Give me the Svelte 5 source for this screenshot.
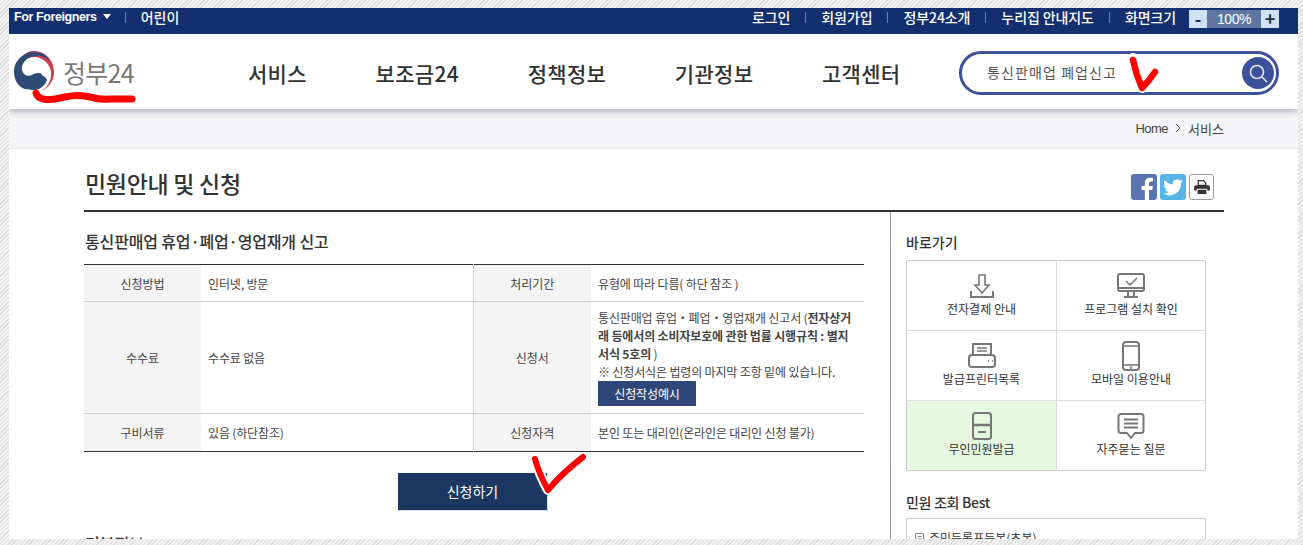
<script>
  const topLeft = ['로그인', '회원가입', '정부24소개', '누리집 안내지도']
  const nav = ['서비스', '보조금24', '정책정보', '기관정보', '고객센터']
  const shortcuts = [
    { label: '전자결제 안내', icon: 'download' },
    { label: '프로그램 설치 확인', icon: 'monitor' },
    { label: '발급프린터목록', icon: 'printer' },
    { label: '모바일 이용안내', icon: 'mobile' },
    { label: '무인민원발급', icon: 'kiosk', active: true },
    { label: '자주묻는 질문', icon: 'faq' }
  ]
</script>

<div class="frame">
  <div class="topbar">
    <div class="top-left">
      <span class="foreign">For Foreigners <i class="caret"></i></span>
      <span class="bar"></span>
      <span class="kids">어린이</span>
    </div>
    <div class="top-right">
      {#each topLeft as item}
        <span>{item}</span>
        <span class="bar"></span>
      {/each}
      <span>화면크기</span>
      <div class="zoom">
        <b>-</b>
        <em>100%</em>
        <b>+</b>
      </div>
    </div>
  </div>

  <header>
    <div class="logo">
      <svg width="42" height="42" viewBox="0 0 42 42">
        <path d="M41 21a20 20 0 0 1-13 19c6-3 11-10 10-19-1-8-8-15-17-15-8 0-14 5-15 12-2-10 6-18 15-18 11 0 20 9 20 21z" fill="#c9404f" />
        <path d="M1 21C1 9 11 1 21 1c8 0 14 4 16 9-3-3-9-6-15-5C13 6 8 13 9 19c1 5 6 7 10 5 3-2 7-3 10-1-1 8-5 14-12 15-9 2-16-7-16-17z" fill="#2d4d76" />
        <path d="M10 17c1-5 6-9 12-9 7 0 13 5 13 12 0 3-1 6-2 7-2-5-7-7-12-5-5 2-10 0-11-5z" fill="#fff" />
        <path d="M6 21c1 4 5 8 10 7 3-1 6-4 10-4 4 0 7 2 8 5-2 6-8 11-15 10C11 38 5 30 6 21z" fill="#2d4d76" />
      </svg>
      <span>정부24</span>
    </div>
    <nav>
      {#each nav as item}
        <a href="#top">{item}</a>
      {/each}
    </nav>
    <div class="search">
      <span>통신판매업 폐업신고</span>
      <div class="search-btn">
        <svg width="22" height="22" viewBox="0 0 22 22" fill="none" stroke="#dfe4f2" stroke-width="1.6">
          <circle cx="10" cy="10" r="6.5" />
          <path d="M15 15l5 5" />
        </svg>
      </div>
    </div>
  </header>

  <div class="crumb">
    <span>Home</span>
    <svg width="6" height="10" viewBox="0 0 6 10" fill="none" stroke="#555"><path d="M1 1l4 4-4 4" /></svg>
    <span>서비스</span>
  </div>

  <main>
    <div class="title-row">
      <h1>민원안내 및 신청</h1>
      <div class="share">
        <div class="fb">
          <svg width="26" height="26" viewBox="0 0 26 26"><path d="M18 26V16h3.2l.6-4H18V9.500c0-1.300.5-2 2-2h2V4c-.8-.1-1.800-.2-3-.2-3.200 0-5.200 1.900-5.200 5.300V12h-3.300v4h3.300v10z" fill="#fff" /></svg>
        </div>
        <div class="tw">
          <svg width="26" height="26" viewBox="0 0 26 26"><path d="M23 7.300c-.7.300-1.500.5-2.300.6.800-.5 1.500-1.300 1.800-2.200-.8.500-1.700.8-2.600 1a4.100 4.100 0 0 0-7 3.700C9.500 10.200 6.500 8.600 4.400 6.100c-1.100 1.900-.5 4.300 1.300 5.500-.7 0-1.300-.2-1.900-.5 0 2 1.400 3.700 3.300 4.100-.6.200-1.200.2-1.900.1.500 1.600 2 2.800 3.800 2.800A8.300 8.300 0 0 1 3 19.300 11.600 11.600 0 0 0 21 9c.8-.5 1.500-1 2-1.700z" fill="#fff" /></svg>
        </div>
        <div class="print">
          <svg width="16" height="14" viewBox="0 0 18 16" fill="#333">
            <path d="M4 0h7l3 3v4H4zM5.500 1.500V5.500h7V3.600L10.400 1.500z" fill-rule="evenodd" />
            <path d="M2 6h14a2 2 0 0 1 2 2v4h-3v-2H3v2H0V8a2 2 0 0 1 2-2z" />
            <path d="M4 11h10v5H4z" />
          </svg>
        </div>
      </div>
    </div>

    <div class="columns">
      <section class="content">
        <h2>통신판매업 휴업·폐업·영업재개 신고</h2>
        <table>
          <tbody>
            <tr>
              <th>신청방법</th>
              <td>인터넷, 방문</td>
              <th class="mid">처리기간</th>
              <td>유형에 따라 다름( 하단 참조 )</td>
            </tr>
            <tr>
              <th>수수료</th>
              <td>수수료 없음</td>
              <th class="mid">신청서</th>
              <td class="form-cell">
                통신판매업 휴업・폐업・영업재개 신고서 (<strong>전자상거래 등에서의 소비자보호에 관한 법률 시행규칙 : 별지 서식 5호의</strong> )
                <p>※ 신청서식은 법령의 마지막 조항 밑에 있습니다.</p>
                <span class="example">신청작성예시</span>
              </td>
            </tr>
            <tr>
              <th>구비서류</th>
              <td>있음 (하단참조)</td>
              <th class="mid">신청자격</th>
              <td>본인 또는 대리인(온라인은 대리인 신청 불가)</td>
            </tr>
          </tbody>
        </table>
        <div class="apply-row">
          <span class="apply">신청하기</span>
        </div>
        <h3>기본정보</h3>
      </section>

      <aside>
        <h4>바로가기</h4>
        <div class="grid">
          {#each shortcuts as s}
            <div class="cell" class:active={s.active}>
              <svg width="30" height="30" viewBox="0 0 30 30" fill="none" stroke="#777" stroke-width="2">
                {#if s.icon === 'download'}
                  <path d="M12 4h6v10h4l-7 8-7-8h4z" stroke-width="1.600" />
                  <path d="M4 20v6h22v-6" />
                {:else if s.icon === 'monitor'}
                  <rect x="2" y="3" width="26" height="17" rx="2" />
                  <path d="M2 17h26" />
                  <path d="M10 10l4 4 7-7" stroke-width="1.500" />
                  <path d="M12 20v5M18 20v5M8 26h14" />
                {:else if s.icon === 'printer'}
                  <path d="M6 14V3h18v11" />
                  <path d="M10 7h10M10 10h10" stroke-width="1.400" />
                  <rect x="2" y="14" width="26" height="12" rx="3" />
                  <path d="M21 20h1M25 20h1" stroke-width="1.500" />
                {:else if s.icon === 'mobile'}
                  <rect x="7" y="1" width="16" height="28" rx="3" />
                  <path d="M7 5h16M7 24h16" stroke-width="1.400" />
                  <circle cx="15" cy="26.500" r="1" stroke-width="1" />
                {:else if s.icon === 'kiosk'}
                  <rect x="6" y="2" width="18" height="26" rx="2.500" />
                  <path d="M6 14h18" stroke-width="2.500" />
                  <path d="M11 21h8" />
                {:else}
                  <path d="M5 3h20a2.500 2.500 0 0 1 2.500 2.500v14a2.500 2.500 0 0 1-2.500 2.500h-6l-4 5-4-5H5a2.500 2.500 0 0 1-2.500-2.500v-14A2.500 2.500 0 0 1 5 3z" />
                  <path d="M8 8.500h14M8 12.500h14M8 16.500h14" />
                {/if}
              </svg>
              <span>{s.label}</span>
            </div>
          {/each}
        </div>
        <h4 class="best">민원 조회 Best</h4>
        <div class="best-box">
          <svg width="9" height="10" viewBox="0 0 9 10" fill="none" stroke="#888"><path d="M.5.500h8v9h-8zM2.500 3.500h4M2.500 6h4" /></svg>
          <span>주민등록표등본(초본)</span>
        </div>
      </aside>
    </div>
  </main>

  <!-- red marker scribbles on top of the capture -->
  <svg class="marks" width="1289" height="531" viewBox="0 0 1289 531" fill="none" stroke-linecap="round" stroke-linejoin="round">
    <path d="M1124 50c2 10 5 20 9 30 4-4 9-10 13-16" stroke="#fff" stroke-width="10" />
    <path d="M526 450c3 12 8 23 13 32 10-12 22-23 35-33" stroke="#fff" stroke-width="10" />
    <path d="M27 85c2 7 12 8 24 5 12-3 18-3 30-1 8 2 14 3 20 2 8 0 14 0 22 0" stroke="#f00" stroke-width="7" />
    <path d="M1124 52c2 10 5 19 9 28 4-4 9-10 13-16" stroke="#f00" stroke-width="6.500" />
    <path d="M526 451c3 11 8 22 13 31 10-12 22-23 35-33" stroke="#f00" stroke-width="6" />
  </svg>
</div>

<style>
  :global(body) {
    background: repeating-linear-gradient(135deg, #dcdcdc 0 1px, #f2f2f2 1px 3px);
    overflow: hidden;
  }
  .frame {
    position: relative;
    margin: 8px 0 0 9px;
    width: 1289px;
    height: 531px;
    overflow: hidden;
    background: #fff;
    color: #333;
    font-family: "Noto Sans CJK KR", "Noto Sans", sans-serif;
    font-size: 12px;
  }

  .topbar {
    height: 26px;
    background: #132f6f;
    color: #fff;
    display: flex;
    justify-content: space-between;
    align-items: flex-start;
    padding: 0 19px 0 5px;
    font-size: 14px;
    font-weight: 500;
    line-height: 18px;
  }
  .top-left, .top-right {
    display: flex;
    align-items: center;
    height: 18px;
  }
  .top-right { letter-spacing: -0.1px; }
  .foreign {
    font-family: "Liberation Sans", sans-serif;
    font-weight: 700;
    font-size: 12.500px;
    letter-spacing: -0.4px;
  }
  .caret {
    display: inline-block;
    margin: 0 0 2px 3px;
    border: 4px solid transparent;
    border-top: 5px solid #fff;
    border-bottom: 0;
  }
  .bar {
    width: 1px;
    height: 11px;
    background: #6d80aa;
    margin: 0 14px;
  }
  .kids { margin-left: 1px; }
  .top-right .bar { margin: 0 15px; }
  .top-right .bar:nth-last-of-type(1) { margin: 0 14px; }
  .zoom {
    display: flex;
    align-items: center;
    height: 18px;
    margin: 4px 0 0 13px;
    background: #5f76a3;
  }
  .zoom b {
    width: 18px;
    height: 18px;
    background: #cfe2f3;
    color: #234;
    text-align: center;
    line-height: 17px;
    font-size: 18px;
  }
  .zoom em {
    width: 54px;
    text-align: center;
    font-style: normal;
    font-family: "Liberation Sans", sans-serif;
    font-size: 14px;
    line-height: 18px;
    letter-spacing: -0.4px;
  }

  header {
    height: 75px;
    display: flex;
    align-items: center;
    padding-left: 4px;
    box-shadow: 0 3px 6px rgba(110, 115, 150, 0.45);
    position: relative;
  }
  .logo {
    width: 235px;
    display: flex;
    align-items: center;
    gap: 8px;
    color: #787878;
    font-size: 25px;
    letter-spacing: -0.7px;
    flex: none;
  }
  nav {
    display: flex;
    gap: 68.700px;
    flex: none;
    width: 711px;
    margin-top: 2px;
  }
  nav a {
    color: #333;
    text-decoration: none;
    font-size: 21px;
    font-weight: 500;
    letter-spacing: 0.3px;
  }
  .search {
    box-sizing: border-box;
    width: 320px;
    height: 44px;
    border: 3px solid #3b5199;
    border-radius: 22px;
    display: flex;
    align-items: center;
    justify-content: space-between;
    padding: 0 2px 0 25px;
    color: #555;
    font-size: 14px;
    font-weight: 400;
    letter-spacing: 1.100px;
    margin-top: 3px;
  }
  .search span { padding-bottom: 2px; }
  .search-btn {
    width: 32px;
    height: 32px;
    border-radius: 50%;
    background: #3b5199;
    display: flex;
    align-items: center;
    justify-content: center;
  }

  .crumb {
    box-sizing: border-box;
    height: 40px;
    background: #f5f4f6;
    border-bottom: 1px solid #e8e8e8;
    display: flex;
    align-items: center;
    justify-content: flex-end;
    gap: 7px;
    padding: 0 74px 1px 0;
    color: #444;
    font-size: 13px;
  }
  .crumb span:first-child {
    font-family: "Liberation Sans", sans-serif;
    letter-spacing: -0.5px;
  }

  main {
    margin: 0 74px 0 75px;
  }
  .title-row {
    box-sizing: border-box;
    height: 63px;
    border-bottom: 2px solid #333;
    display: flex;
    justify-content: space-between;
    align-items: flex-start;
  }
  h1 {
    margin: 16px 0 0 1px;
    font-size: 23px;
    line-height: 36px;
    font-weight: 500;
    letter-spacing: -0.3px;
    color: #333;
  }
  .share {
    display: flex;
    gap: 3px;
    margin: 25px 10px 0 0;
  }
  .share > div {
    box-sizing: border-box;
    width: 26px;
    height: 26px;
    border-radius: 3px;
    overflow: hidden;
  }
  .fb { background: #5b74b1; }
  .tw { background: #55b4e8; }
  .print {
    width: 25px !important;
    border: 1px solid #999;
    display: flex;
    align-items: center;
    justify-content: center;
  }

  .columns {
    display: flex;
    align-items: stretch;
  }
  .content {
    box-sizing: border-box;
    width: 807px;
    padding-right: 26px;
    border-right: 1px solid #999;
    height: 330px;
  }
  h2 {
    margin: 18px 0 12px 1px;
    font-size: 16px;
    line-height: 22px;
    font-weight: 500;
    letter-spacing: -0.15px;
    color: #333;
  }
  table {
    width: 780px;
    border-collapse: collapse;
    table-layout: fixed;
    border-top: 1px solid #333;
    border-bottom: 1px solid #333;
  }
  th, td {
    box-sizing: border-box;
    padding: 0;
    font-weight: 400;
    font-size: 12px;
    color: #444;
    border-bottom: 1px solid #d0d0d0;
  }
  tr:last-child th, tr:last-child td { border-bottom: 0; }
  tr:first-child th, tr:first-child td { height: 37px; }
  tr:last-child th, tr:last-child td { height: 38px; }
  th {
    background: #f4f4f4;
    text-align: center;
  }
  th.mid { border-left: 1px solid #d0d0d0; }
  td {
    padding-left: 7px;
    letter-spacing: -0.15px;
  }
  table tr th:nth-child(1) { width: 117px; }
  table tr td:nth-child(2) { width: 272px; }
  table tr th:nth-child(3) { width: 118px; }
  table tr td:nth-child(4) { width: 273px; }
  td.form-cell {
    padding: 7px 4px 7px 7px;
    line-height: 18px;
  }
  td strong { font-weight: 700; }
  td p { margin: 0; }
  .example {
    display: block;
    width: 98px;
    height: 25px;
    background: #2f4778;
    color: #fff;
    text-align: center;
    line-height: 25px;
  }
  .apply-row {
    display: flex;
    justify-content: center;
    margin-top: 21px;
    padding-right: 2px;
  }
  .apply {
    width: 150px;
    height: 38px;
    background: #1c3862;
    color: #fff;
    border-right: 1px solid #ddd;
    border-bottom: 1px solid #ddd;
    box-sizing: border-box;
    text-align: center;
    line-height: 37px;
    font-size: 14px;
  }
  h3 {
    margin: 21px 0 0 1px;
    font-size: 16px;
    font-weight: 500;
    line-height: 22px;
    color: #333;
  }

  aside {
    padding-left: 15px;
    width: 300px;
  }
  h4 {
    margin: 20px 0 8px;
    font-size: 14px;
    line-height: 20px;
    font-weight: 500;
    color: #333;
  }
  .grid {
    box-sizing: border-box;
    width: 300px;
    display: grid;
    grid-template-columns: 150px 1fr;
    grid-auto-rows: 70px;
    border: 1px solid #ccc;
    border-bottom: 0;
  }
  .cell {
    box-sizing: border-box;
    display: flex;
    flex-direction: column;
    align-items: center;
    padding-top: 10px;
    border-bottom: 1px solid #ddd;
    color: #333;
    line-height: 16px;
  }
  .cell:nth-child(odd) { border-right: 1px solid #ddd; }
  .cell:nth-last-child(-n + 2) { border-bottom-color: #ccc; }
  .cell.active { background: #e6f8df; }
  .best {
    margin: 21px 0 6px;
    letter-spacing: -0.3px;
  }
  .best-box {
    box-sizing: border-box;
    width: 300px;
    height: 40px;
    border: 1px solid #ccc;
    padding: 7px 8px;
    display: flex;
    align-items: center;
    align-self: flex-start;
    gap: 5px;
    line-height: 18px;
  }
  .best-box svg { flex: none; }
  .best-box span { display: block; }

  .marks {
    position: absolute;
    left: 0;
    top: 0;
    pointer-events: none;
  }
</style>
